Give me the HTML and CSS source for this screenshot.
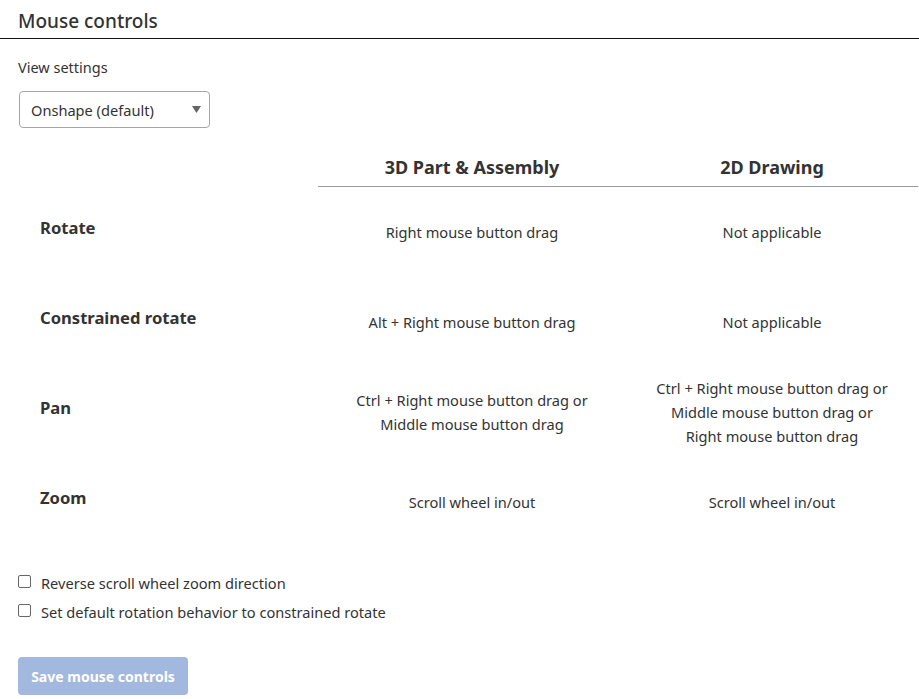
FILE: index.html
```html
<!DOCTYPE html>
<html>
<head>
<meta charset="utf-8">
<link rel="stylesheet" href="styles.css">
</head>
<body>
<div class="header"><h1 class="title">Mouse controls</h1></div>
<div class="content">
  <div class="field-label">View settings</div>
  <div class="select">
    <span>Onshape (default)</span>
    <svg class="caret" width="9" height="7" viewBox="0 0 9 7"><path d="M0 0H9L4.5 7Z" fill="#666"/></svg>
  </div>
  <div class="table">
    <div class="th-empty"></div>
    <div class="th">3D Part &amp; Assembly</div>
    <div class="th">2D Drawing</div>

    <div class="rl">Rotate</div>
    <div class="td">Right mouse button drag</div>
    <div class="td">Not applicable</div>

    <div class="rl">Constrained rotate</div>
    <div class="td">Alt + Right mouse button drag</div>
    <div class="td">Not applicable</div>

    <div class="rl">Pan</div>
    <div class="td">Ctrl + Right mouse button drag or<br>Middle mouse button drag</div>
    <div class="td">Ctrl + Right mouse button drag or<br>Middle mouse button drag or<br>Right mouse button drag</div>

    <div class="rl">Zoom</div>
    <div class="td">Scroll wheel in/out</div>
    <div class="td">Scroll wheel in/out</div>
  </div>
  <div class="checks">
    <label class="check"><span class="box"></span>Reverse scroll wheel zoom direction</label>
    <label class="check"><span class="box"></span>Set default rotation behavior to constrained rotate</label>
  </div>
  <button class="save">Save mouse controls</button>
</div>
</body>
</html>
```
FILE: styles.css
```css
html, body { margin: 0; padding: 0; background: #fff; }
body { font-family: "Noto Sans", Roboto, sans-serif; color: #333; }
.header { border-bottom: 1px solid #111; padding: 9px 18px 4px; }
.title { margin: 0; font-size: 19px; font-weight: 500; line-height: 25px; color: #333; }
.content { padding: 18px 0 0 18px; }
.field-label { font-size: 14.5px; line-height: 20px; color: #333; }
.select {
  margin-top: 14px; margin-left: 1px;
  display: flex; align-items: center; justify-content: space-between;
  padding: 0 0 0 11px; box-sizing: border-box; width: 191px; height: 37px;
  border: 1px solid #a6a6a6; border-radius: 4px;
  font-size: 14.6px; color: #333;
}
.caret { margin-right: 8px; margin-top: -1px; }
.table {
  display: grid; grid-template-columns: 300px 300px 300px;
  margin-top: 18px;
}
.th { text-align: center; font-size: 18px; font-weight: 700; line-height: 20px;
  padding: 11px 0 9px 8px; border-bottom: 1px solid #999; color: #333; }
.rl { height: 90px; display: flex; align-items: center; padding: 0 0 10px 22px; box-sizing: border-box;
  font-size: 16.6px; font-weight: 700; color: #333; }
.td { height: 90px; display: flex; align-items: center; justify-content: center; text-align: center;
  padding-left: 8px; font-size: 14.6px; line-height: 24px; color: #333; }
.checks { margin-top: 26px; display: flex; flex-direction: column; gap: 9px; }
.check { display: flex; align-items: center; font-size: 14.6px; line-height: 20px; color: #333; }
.box { width: 11px; height: 11px; border: 1px solid #666; border-radius: 2px; margin: -4px 10px 0 0; }
.save {
  margin-top: 35px; width: 170px; height: 38px; border: none; border-radius: 4px;
  background: #a3b8de; color: #fff; font-family: "Noto Sans", Roboto, sans-serif; font-size: 14px; font-weight: 700;
  padding: 0;
}
```
